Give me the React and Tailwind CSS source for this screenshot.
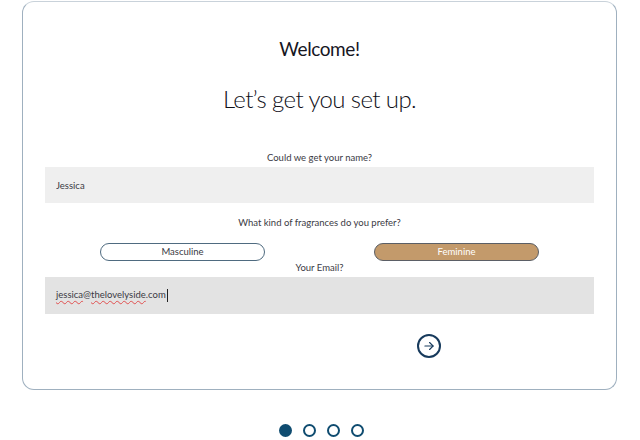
import { useState } from "react";

export default function App() {
  const [name, setName] = useState("Jessica");
  const [pref, setPref] = useState("feminine");

  return (
    <main className="min-h-screen bg-white font-['Lato',sans-serif] text-[#2b2b33]">
      <section className="mt-px ml-[22px] h-[389px] w-[595px] rounded-[12px] border border-[#9fb0bf] border-t-[#c9d2da] px-[22px]">
        <h1 className="pt-[33px] text-center text-[19px] leading-[28px] font-normal tracking-[-0.4px] text-[#16161f]">
          Welcome!
        </h1>
        <h2 className="mt-[18px] text-center text-[24px] leading-[36px] font-light tracking-[-0.6px] text-[#101018]">
          Let’s get you set up.
        </h2>

        <label className="mt-[34px] block text-center text-[9.5px] leading-[14px] text-[#3a3a44]">
          Could we get your name?
        </label>
        <input
          value={name}
          onChange={(e) => setName(e.target.value)}
          className="mt-[2px] block h-[36px] w-full bg-[#efefef] px-[11px] text-[9.5px] text-[#3a3a44] outline-none"
        />

        <p className="mt-[13px] text-center text-[9.5px] leading-[14px] text-[#3a3a44]">
          What kind of fragrances do you prefer?
        </p>
        <div className="mt-[13px] flex justify-between px-[55px]">
          <PrefButton
            label="Masculine"
            active={pref === "masculine"}
            onClick={() => setPref("masculine")}
          />
          <PrefButton
            label="Feminine"
            active={pref === "feminine"}
            onClick={() => setPref("feminine")}
          />
        </div>

        <label className="block text-center text-[9.5px] leading-[14px] text-[#3a3a44]">
          Your Email?
        </label>
        <div className="mt-[2px] flex h-[37px] items-center bg-[#e3e3e3] px-[11px] text-[9.5px] text-[#3a3a44]">
          <span className="underline decoration-[#e05050] decoration-wavy decoration-[1px] underline-offset-2">
            jessica
          </span>
          <span>@</span>
          <span className="underline decoration-[#e05050] decoration-wavy decoration-[1px] underline-offset-2">
            thelovelyside
          </span>
          <span>.com</span>
          <span className="ml-px h-[13px] w-px bg-[#222]" />
        </div>

        <div className="mt-[20px] pl-[372px]">
          <button className="flex h-[24px] w-[24px] items-center justify-center rounded-full border-2 border-[#173a5c] text-[#173a5c]">
            <svg width="14" height="14" viewBox="0 0 24 24" fill="none" stroke="currentColor" strokeWidth="2" strokeLinecap="round" strokeLinejoin="round">
              <path d="M5 12h14" />
              <path d="M13 6l6 6-6 6" />
            </svg>
          </button>
        </div>
      </section>

      <div className="mt-[34px] flex justify-center gap-[11px] pl-[2px]">
        <span className="h-[13px] w-[13px] rounded-full bg-[#0f4c70]" />
        <span className="h-[13px] w-[13px] rounded-full border-[2.5px] border-[#0f4c70]" />
        <span className="h-[13px] w-[13px] rounded-full border-[2.5px] border-[#0f4c70]" />
        <span className="h-[13px] w-[13px] rounded-full border-[2.5px] border-[#0f4c70]" />
      </div>
    </main>
  );
}

function PrefButton({ label, active, onClick }) {
  return (
    <button
      onClick={onClick}
      className={`h-[18px] w-[165px] rounded-full border text-[9.5px] leading-none ${
        active
          ? "border-[#5b5f66] bg-[#c39a6b] text-white"
          : "border-[#4f6b80] bg-white text-[#3a3a44]"
      }`}
    >
      {label}
    </button>
  );
}
